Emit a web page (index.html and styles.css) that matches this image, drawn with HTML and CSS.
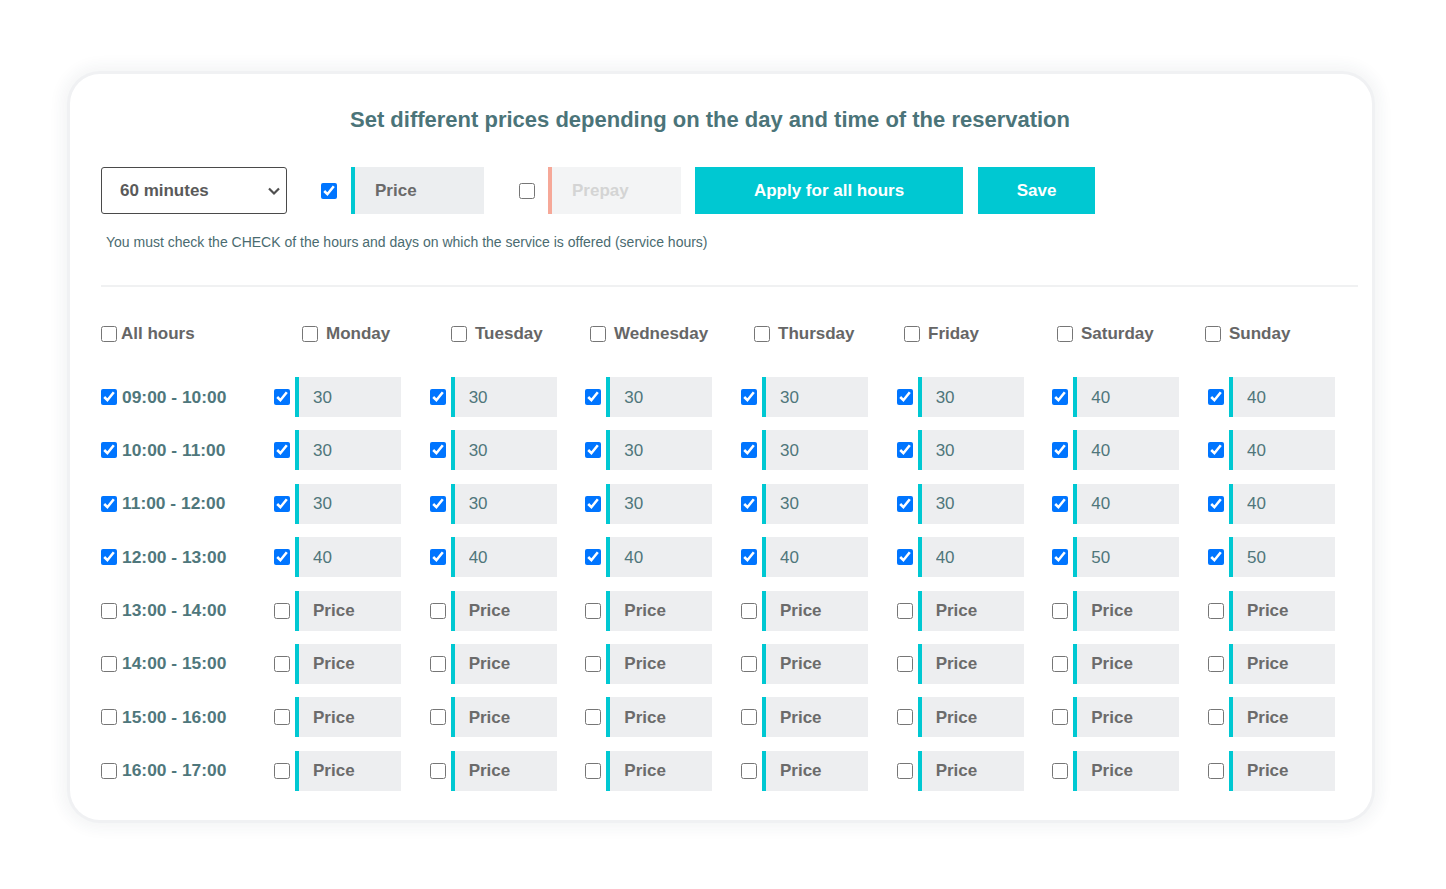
FILE: index.html
```html
<!DOCTYPE html>
<html lang="en">
<head>
    <meta charset="UTF-8">
    <title>Prices by day and hour</title>
    <link rel="stylesheet" href="styles.css">
</head>
<body>
<div class="card">
    <h2 class="title">Set different prices depending on the day and time of the reservation</h2>

    <div class="toolbar">
        <div class="select-wrap">
            <select class="duration">
                <option>60 minutes</option>
                <option>30 minutes</option>
                <option>90 minutes</option>
            </select>
            <svg class="chevron" width="14" height="10" viewBox="0 0 14 10"><path d="M2 2.5l5 5 5-5" fill="none" stroke="#4f4f4f" stroke-width="2.2"/></svg>
        </div>
        <input type="checkbox" class="chk" checked>
        <input type="text" class="field field-price" placeholder="Price">
        <input type="checkbox" class="chk chk-prepay">
        <input type="text" class="field field-prepay" placeholder="Prepay">
        <button class="btn btn-apply">Apply for all hours</button>
        <button class="btn btn-save">Save</button>
    </div>
    <p class="note">You must check the CHECK of the hours and days on which the service is offered (service hours)</p>

    <hr class="divider">

    <div class="head">
        <label class="head-all"><input type="checkbox" class="chk">All hours</label>
        <label class="head-day"><input type="checkbox" class="chk">Monday</label>
        <label class="head-day"><input type="checkbox" class="chk">Tuesday</label>
        <label class="head-day"><input type="checkbox" class="chk">Wednesday</label>
        <label class="head-day"><input type="checkbox" class="chk">Thursday</label>
        <label class="head-day"><input type="checkbox" class="chk">Friday</label>
        <label class="head-day"><input type="checkbox" class="chk">Saturday</label>
        <label class="head-day"><input type="checkbox" class="chk">Sunday</label>
    </div>

    <div class="grid">
        <div class="row">
            <label class="hour"><input type="checkbox" class="chk" checked>09:00 - 10:00</label>
            <div class="cell"><input type="checkbox" class="chk" checked><input type="text" class="price" value="30" placeholder="Price"></div>
            <div class="cell"><input type="checkbox" class="chk" checked><input type="text" class="price" value="30" placeholder="Price"></div>
            <div class="cell"><input type="checkbox" class="chk" checked><input type="text" class="price" value="30" placeholder="Price"></div>
            <div class="cell"><input type="checkbox" class="chk" checked><input type="text" class="price" value="30" placeholder="Price"></div>
            <div class="cell"><input type="checkbox" class="chk" checked><input type="text" class="price" value="30" placeholder="Price"></div>
            <div class="cell"><input type="checkbox" class="chk" checked><input type="text" class="price" value="40" placeholder="Price"></div>
            <div class="cell"><input type="checkbox" class="chk" checked><input type="text" class="price" value="40" placeholder="Price"></div>
        </div>
        <div class="row">
            <label class="hour"><input type="checkbox" class="chk" checked>10:00 - 11:00</label>
            <div class="cell"><input type="checkbox" class="chk" checked><input type="text" class="price" value="30" placeholder="Price"></div>
            <div class="cell"><input type="checkbox" class="chk" checked><input type="text" class="price" value="30" placeholder="Price"></div>
            <div class="cell"><input type="checkbox" class="chk" checked><input type="text" class="price" value="30" placeholder="Price"></div>
            <div class="cell"><input type="checkbox" class="chk" checked><input type="text" class="price" value="30" placeholder="Price"></div>
            <div class="cell"><input type="checkbox" class="chk" checked><input type="text" class="price" value="30" placeholder="Price"></div>
            <div class="cell"><input type="checkbox" class="chk" checked><input type="text" class="price" value="40" placeholder="Price"></div>
            <div class="cell"><input type="checkbox" class="chk" checked><input type="text" class="price" value="40" placeholder="Price"></div>
        </div>
        <div class="row">
            <label class="hour"><input type="checkbox" class="chk" checked>11:00 - 12:00</label>
            <div class="cell"><input type="checkbox" class="chk" checked><input type="text" class="price" value="30" placeholder="Price"></div>
            <div class="cell"><input type="checkbox" class="chk" checked><input type="text" class="price" value="30" placeholder="Price"></div>
            <div class="cell"><input type="checkbox" class="chk" checked><input type="text" class="price" value="30" placeholder="Price"></div>
            <div class="cell"><input type="checkbox" class="chk" checked><input type="text" class="price" value="30" placeholder="Price"></div>
            <div class="cell"><input type="checkbox" class="chk" checked><input type="text" class="price" value="30" placeholder="Price"></div>
            <div class="cell"><input type="checkbox" class="chk" checked><input type="text" class="price" value="40" placeholder="Price"></div>
            <div class="cell"><input type="checkbox" class="chk" checked><input type="text" class="price" value="40" placeholder="Price"></div>
        </div>
        <div class="row">
            <label class="hour"><input type="checkbox" class="chk" checked>12:00 - 13:00</label>
            <div class="cell"><input type="checkbox" class="chk" checked><input type="text" class="price" value="40" placeholder="Price"></div>
            <div class="cell"><input type="checkbox" class="chk" checked><input type="text" class="price" value="40" placeholder="Price"></div>
            <div class="cell"><input type="checkbox" class="chk" checked><input type="text" class="price" value="40" placeholder="Price"></div>
            <div class="cell"><input type="checkbox" class="chk" checked><input type="text" class="price" value="40" placeholder="Price"></div>
            <div class="cell"><input type="checkbox" class="chk" checked><input type="text" class="price" value="40" placeholder="Price"></div>
            <div class="cell"><input type="checkbox" class="chk" checked><input type="text" class="price" value="50" placeholder="Price"></div>
            <div class="cell"><input type="checkbox" class="chk" checked><input type="text" class="price" value="50" placeholder="Price"></div>
        </div>
        <div class="row">
            <label class="hour"><input type="checkbox" class="chk">13:00 - 14:00</label>
            <div class="cell"><input type="checkbox" class="chk"><input type="text" class="price" placeholder="Price"></div>
            <div class="cell"><input type="checkbox" class="chk"><input type="text" class="price" placeholder="Price"></div>
            <div class="cell"><input type="checkbox" class="chk"><input type="text" class="price" placeholder="Price"></div>
            <div class="cell"><input type="checkbox" class="chk"><input type="text" class="price" placeholder="Price"></div>
            <div class="cell"><input type="checkbox" class="chk"><input type="text" class="price" placeholder="Price"></div>
            <div class="cell"><input type="checkbox" class="chk"><input type="text" class="price" placeholder="Price"></div>
            <div class="cell"><input type="checkbox" class="chk"><input type="text" class="price" placeholder="Price"></div>
        </div>
        <div class="row">
            <label class="hour"><input type="checkbox" class="chk">14:00 - 15:00</label>
            <div class="cell"><input type="checkbox" class="chk"><input type="text" class="price" placeholder="Price"></div>
            <div class="cell"><input type="checkbox" class="chk"><input type="text" class="price" placeholder="Price"></div>
            <div class="cell"><input type="checkbox" class="chk"><input type="text" class="price" placeholder="Price"></div>
            <div class="cell"><input type="checkbox" class="chk"><input type="text" class="price" placeholder="Price"></div>
            <div class="cell"><input type="checkbox" class="chk"><input type="text" class="price" placeholder="Price"></div>
            <div class="cell"><input type="checkbox" class="chk"><input type="text" class="price" placeholder="Price"></div>
            <div class="cell"><input type="checkbox" class="chk"><input type="text" class="price" placeholder="Price"></div>
        </div>
        <div class="row">
            <label class="hour"><input type="checkbox" class="chk">15:00 - 16:00</label>
            <div class="cell"><input type="checkbox" class="chk"><input type="text" class="price" placeholder="Price"></div>
            <div class="cell"><input type="checkbox" class="chk"><input type="text" class="price" placeholder="Price"></div>
            <div class="cell"><input type="checkbox" class="chk"><input type="text" class="price" placeholder="Price"></div>
            <div class="cell"><input type="checkbox" class="chk"><input type="text" class="price" placeholder="Price"></div>
            <div class="cell"><input type="checkbox" class="chk"><input type="text" class="price" placeholder="Price"></div>
            <div class="cell"><input type="checkbox" class="chk"><input type="text" class="price" placeholder="Price"></div>
            <div class="cell"><input type="checkbox" class="chk"><input type="text" class="price" placeholder="Price"></div>
        </div>
        <div class="row">
            <label class="hour"><input type="checkbox" class="chk">16:00 - 17:00</label>
            <div class="cell"><input type="checkbox" class="chk"><input type="text" class="price" placeholder="Price"></div>
            <div class="cell"><input type="checkbox" class="chk"><input type="text" class="price" placeholder="Price"></div>
            <div class="cell"><input type="checkbox" class="chk"><input type="text" class="price" placeholder="Price"></div>
            <div class="cell"><input type="checkbox" class="chk"><input type="text" class="price" placeholder="Price"></div>
            <div class="cell"><input type="checkbox" class="chk"><input type="text" class="price" placeholder="Price"></div>
            <div class="cell"><input type="checkbox" class="chk"><input type="text" class="price" placeholder="Price"></div>
            <div class="cell"><input type="checkbox" class="chk"><input type="text" class="price" placeholder="Price"></div>
        </div>
    </div>
</div>
</body>
</html>
```

FILE: styles.css
```css
*{
    margin: 0;
    padding: 0;
    box-sizing: border-box;
}
body{
    background: #fff;
    font-family: "Liberation Sans", Arial, sans-serif;
    padding: 74px 74px 69px 70px;
}
.card{
    width: 1302px;
    height: 746px;
    background: #fff;
    border-radius: 30px;
    box-shadow: 0 0 0 3px #f0f1f3, 0 0 14px 9px rgba(40, 50, 70, 0.05);
    padding: 34px 31px 0 31px;
}
.title{
    font-size: 22px;
    line-height: 24px;
    font-weight: bold;
    color: #4b7479;
    text-align: center;
    padding-right: 22px;
}

/* top controls */
.toolbar{
    display: flex;
    align-items: center;
    height: 47px;
    margin-top: 35px;
}
.select-wrap{
    position: relative;
    width: 186px;
    height: 47px;
    margin-right: 34px;
}
.duration{
    appearance: none;
    -webkit-appearance: none;
    width: 100%;
    height: 100%;
    border: 1px solid #4a4a4a;
    border-radius: 3px;
    background: #fff;
    padding-left: 18px;
    font-family: inherit;
    font-size: 17px;
    font-weight: bold;
    color: #5a5a5a;
}
.chevron{
    position: absolute;
    right: 6px;
    top: 19px;
    pointer-events: none;
}
.chk{
    width: 16px;
    height: 16px;
    margin: 0;
    flex: none;
}
.toolbar .chk{
    margin-right: 14px;
}
.toolbar .chk-prepay{
    margin-right: 13px;
}
.field{
    width: 133px;
    height: 47px;
    border: none;
    outline: none;
    padding-left: 20px;
    font-family: inherit;
    font-size: 17px;
    font-weight: bold;
}
.field-price{
    border-left: 4px solid #00c8d2;
    background: #eceef0;
    margin-right: 35px;
}
.field-price::placeholder{
    color: #6a6a6a;
}
.field-prepay{
    border-left: 4px solid #f6a898;
    background: #f3f4f5;
    margin-right: 14px;
}
.field-prepay::placeholder{
    color: #d4d4d4;
}
.btn{
    height: 47px;
    border: none;
    background: #00c8d2;
    color: #fff;
    font-family: inherit;
    font-size: 17px;
    font-weight: bold;
}
.btn-apply{
    width: 268px;
    margin-right: 15px;
}
.btn-save{
    width: 117px;
}
.note{
    margin-top: 20px;
    padding-left: 5px;
    font-size: 14px;
    line-height: 17px;
    color: #4a6b70;
}
.divider{
    border: none;
    border-top: 2px solid #f0f1f2;
    margin-top: 34px;
    margin-right: -17px;
}

/* day headers */
.head{
    display: grid;
    grid-template-columns: 201px 149px 139px 164px 150px 153px 148px auto;
    align-items: center;
    height: 20px;
    margin-top: 37px;
}
.head label{
    display: flex;
    align-items: center;
    font-size: 17px;
    font-weight: bold;
    color: #666;
    gap: 8px;
}
.head .head-all{
    gap: 4px;
}

/* hours x days */
.grid{
    display: flex;
    flex-direction: column;
    gap: 13.4px;
    margin-top: 33px;
}
.row{
    display: grid;
    grid-template-columns: 173px repeat(7, 155.67px);
    align-items: center;
    height: 40px;
}
.hour{
    display: flex;
    align-items: center;
    gap: 5px;
    font-size: 17.4px;
    font-weight: bold;
    color: #4f777c;
}
.cell{
    display: flex;
    align-items: center;
    gap: 5px;
}
.price{
    width: 106px;
    height: 40px;
    border: none;
    border-left: 4px solid #00c8d2;
    background: #edeef0;
    outline: none;
    padding: 1px 0 0 14px;
    font-family: inherit;
    font-size: 17px;
    color: #4f767b;
}
.price::placeholder{
    color: #6b6b6b;
    font-weight: bold;
}
```
